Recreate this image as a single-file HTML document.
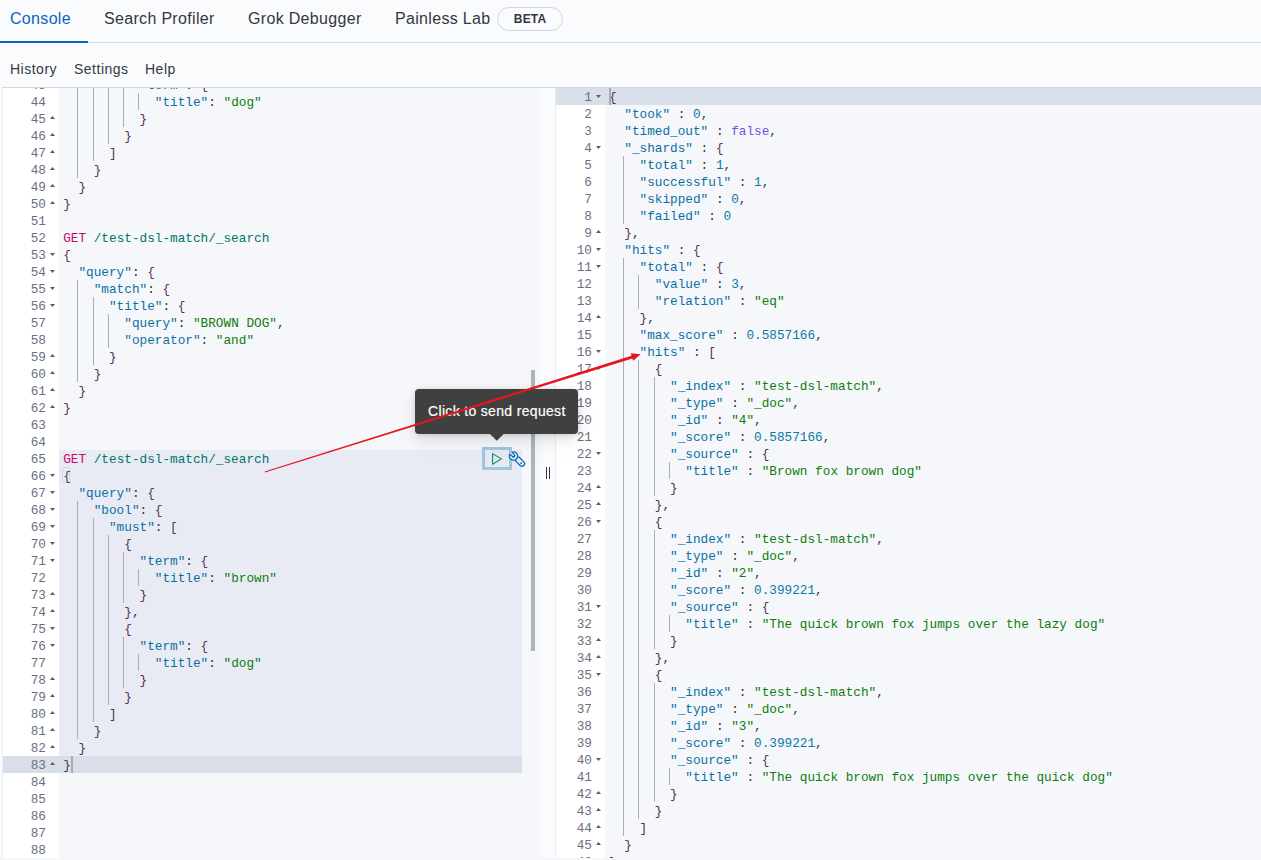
<!DOCTYPE html>
<html><head><meta charset="utf-8">
<style>
*{margin:0;padding:0;box-sizing:border-box}
html,body{width:1261px;height:860px;overflow:hidden;background:#fafbfd;font-family:"Liberation Sans",sans-serif;position:relative}
.abs{position:absolute}
.tab{position:absolute;top:9px;letter-spacing:0.32px;font-size:16px;color:#343741;white-space:nowrap;line-height:20px}
.menu{position:absolute;top:60px;letter-spacing:0.5px;font-size:14px;color:#343741;white-space:nowrap;line-height:18px}
.ed{position:absolute;overflow:hidden}
.inner{position:absolute;left:0;top:-88px;width:1261px;height:860px}
.ln{position:absolute;height:17px;line-height:17px;text-align:right;font-family:"Liberation Mono",monospace;font-size:12.731px;color:#69707d;padding-top:1px}
.tl{position:absolute;height:17px;line-height:17px;white-space:pre;font-family:"Liberation Mono",monospace;font-size:12.731px;color:#343741;padding-top:1px}
.fo,.fc{position:absolute;display:block}
.g{position:absolute;width:1px;height:17px;background:#a8afbc}
.m{color:#c80a68}
.u{color:#00756c}
.k{color:#0b6fa4}
.s{color:#0e7d0e}
.n{color:#0b7aa5}
.b{color:#7052e8}
.p{color:#523455}
.o{color:#343741}
</style></head><body>
<!-- tabs -->
<div class="tab" style="left:10px;color:#0b64c0">Console</div>
<div class="tab" style="left:104px">Search Profiler</div>
<div class="tab" style="left:248px">Grok Debugger</div>
<div class="tab" style="left:395px">Painless Lab</div>
<div class="abs" style="left:497px;top:7px;width:66px;height:24px;border:1px solid #cdd3df;border-radius:12px;font-size:12px;font-weight:bold;color:#343741;text-align:center;line-height:23px;letter-spacing:0.2px;text-indent:0.2px">BETA</div>
<div class="abs" style="left:0;top:42px;width:1261px;height:1px;background:#d3dae6"></div>
<div class="abs" style="left:0;top:41px;width:88px;height:2px;background:#0b64c0"></div>
<!-- menu -->
<div class="menu" style="left:10px">History</div>
<div class="menu" style="left:74px">Settings</div>
<div class="menu" style="left:145px">Help</div>
<!-- editor frame -->
<div class="abs" style="left:2px;top:87px;width:1259px;height:1px;background:#d3dae6"></div>
<div class="abs" style="left:2px;top:88px;width:1px;height:770px;background:#eaedf2"></div>
<div class="abs" style="left:555px;top:88px;width:1px;height:770px;background:#eaedf2"></div>
<div class="abs" style="left:0;top:858px;width:1261px;height:2px;background:#f5f6f9"></div>
<!-- left editor -->
<div class="ed" style="left:0;top:88px;width:541px;height:770px">
<div class="inner">
<div class="abs" style="left:3px;top:88px;width:56px;height:770px;background:#ffffff"></div>
<div class="abs" style="left:59px;top:88px;width:482px;height:770px;background:#f5f7fa"></div>
<div class="abs" style="left:59px;top:450px;width:463px;height:306px;background:#e8ebf3"></div>
<div class="abs" style="left:3px;top:756px;width:519px;height:17px;background:#d9dfe8"></div>
<div class="abs" style="left:62px;top:467px;width:8px;height:16px;border:1px solid #d3d9e3;border-radius:3px"></div>
<div class="ln" style="top:76px;left:3px;width:43px">43</div>
<svg class="fo" style="top:82px;left:50px" width="6" height="5"><path d="M0 1 L5 1 L2.5 4 Z" fill="#5c5c5c"/></svg>
<div class="g" style="top:76px;left:77.0px"></div>
<div class="g" style="top:76px;left:93.0px"></div>
<div class="g" style="top:76px;left:108.0px"></div>
<div class="g" style="top:76px;left:123.0px"></div>
<div class="tl" style="top:76px;left:63.2px">          <span class="k">&quot;term&quot;</span><span class="o">:</span> <span class="p">{</span></div>
<div class="ln" style="top:93px;left:3px;width:43px">44</div>
<div class="g" style="top:93px;left:77.0px"></div>
<div class="g" style="top:93px;left:93.0px"></div>
<div class="g" style="top:93px;left:108.0px"></div>
<div class="g" style="top:93px;left:123.0px"></div>
<div class="g" style="top:93px;left:138.0px"></div>
<div class="tl" style="top:93px;left:63.2px">            <span class="k">&quot;title&quot;</span><span class="o">:</span> <span class="s">&quot;dog&quot;</span></div>
<div class="ln" style="top:110px;left:3px;width:43px">45</div>
<svg class="fc" style="top:115px;left:50px" width="6" height="5"><path d="M0 4 L5 4 L2.5 0.9 Z" fill="#5c5c5c"/></svg>
<div class="g" style="top:110px;left:77.0px"></div>
<div class="g" style="top:110px;left:93.0px"></div>
<div class="g" style="top:110px;left:108.0px"></div>
<div class="g" style="top:110px;left:123.0px"></div>
<div class="tl" style="top:110px;left:63.2px">          <span class="p">}</span></div>
<div class="ln" style="top:127px;left:3px;width:43px">46</div>
<svg class="fc" style="top:132px;left:50px" width="6" height="5"><path d="M0 4 L5 4 L2.5 0.9 Z" fill="#5c5c5c"/></svg>
<div class="g" style="top:127px;left:77.0px"></div>
<div class="g" style="top:127px;left:93.0px"></div>
<div class="g" style="top:127px;left:108.0px"></div>
<div class="tl" style="top:127px;left:63.2px">        <span class="p">}</span></div>
<div class="ln" style="top:144px;left:3px;width:43px">47</div>
<svg class="fc" style="top:149px;left:50px" width="6" height="5"><path d="M0 4 L5 4 L2.5 0.9 Z" fill="#5c5c5c"/></svg>
<div class="g" style="top:144px;left:77.0px"></div>
<div class="g" style="top:144px;left:93.0px"></div>
<div class="tl" style="top:144px;left:63.2px">      <span class="p">]</span></div>
<div class="ln" style="top:161px;left:3px;width:43px">48</div>
<svg class="fc" style="top:166px;left:50px" width="6" height="5"><path d="M0 4 L5 4 L2.5 0.9 Z" fill="#5c5c5c"/></svg>
<div class="g" style="top:161px;left:77.0px"></div>
<div class="tl" style="top:161px;left:63.2px">    <span class="p">}</span></div>
<div class="ln" style="top:178px;left:3px;width:43px">49</div>
<svg class="fc" style="top:183px;left:50px" width="6" height="5"><path d="M0 4 L5 4 L2.5 0.9 Z" fill="#5c5c5c"/></svg>
<div class="tl" style="top:178px;left:63.2px">  <span class="p">}</span></div>
<div class="ln" style="top:195px;left:3px;width:43px">50</div>
<svg class="fc" style="top:200px;left:50px" width="6" height="5"><path d="M0 4 L5 4 L2.5 0.9 Z" fill="#5c5c5c"/></svg>
<div class="tl" style="top:195px;left:63.2px"><span class="p">}</span></div>
<div class="ln" style="top:212px;left:3px;width:43px">51</div>
<div class="tl" style="top:212px;left:63.2px"></div>
<div class="ln" style="top:229px;left:3px;width:43px">52</div>
<div class="tl" style="top:229px;left:63.2px"><span class="m">GET</span> <span class="u">/test-dsl-match/_search</span></div>
<div class="ln" style="top:246px;left:3px;width:43px">53</div>
<svg class="fo" style="top:252px;left:50px" width="6" height="5"><path d="M0 1 L5 1 L2.5 4 Z" fill="#5c5c5c"/></svg>
<div class="tl" style="top:246px;left:63.2px"><span class="p">{</span></div>
<div class="ln" style="top:263px;left:3px;width:43px">54</div>
<svg class="fo" style="top:269px;left:50px" width="6" height="5"><path d="M0 1 L5 1 L2.5 4 Z" fill="#5c5c5c"/></svg>
<div class="tl" style="top:263px;left:63.2px">  <span class="k">&quot;query&quot;</span><span class="o">:</span> <span class="p">{</span></div>
<div class="ln" style="top:280px;left:3px;width:43px">55</div>
<svg class="fo" style="top:286px;left:50px" width="6" height="5"><path d="M0 1 L5 1 L2.5 4 Z" fill="#5c5c5c"/></svg>
<div class="g" style="top:280px;left:77.0px"></div>
<div class="tl" style="top:280px;left:63.2px">    <span class="k">&quot;match&quot;</span><span class="o">:</span> <span class="p">{</span></div>
<div class="ln" style="top:297px;left:3px;width:43px">56</div>
<svg class="fo" style="top:303px;left:50px" width="6" height="5"><path d="M0 1 L5 1 L2.5 4 Z" fill="#5c5c5c"/></svg>
<div class="g" style="top:297px;left:77.0px"></div>
<div class="g" style="top:297px;left:93.0px"></div>
<div class="tl" style="top:297px;left:63.2px">      <span class="k">&quot;title&quot;</span><span class="o">:</span> <span class="p">{</span></div>
<div class="ln" style="top:314px;left:3px;width:43px">57</div>
<div class="g" style="top:314px;left:77.0px"></div>
<div class="g" style="top:314px;left:93.0px"></div>
<div class="g" style="top:314px;left:108.0px"></div>
<div class="tl" style="top:314px;left:63.2px">        <span class="k">&quot;query&quot;</span><span class="o">:</span> <span class="s">&quot;BROWN DOG&quot;</span><span class="o">,</span></div>
<div class="ln" style="top:331px;left:3px;width:43px">58</div>
<div class="g" style="top:331px;left:77.0px"></div>
<div class="g" style="top:331px;left:93.0px"></div>
<div class="g" style="top:331px;left:108.0px"></div>
<div class="tl" style="top:331px;left:63.2px">        <span class="k">&quot;operator&quot;</span><span class="o">:</span> <span class="s">&quot;and&quot;</span></div>
<div class="ln" style="top:348px;left:3px;width:43px">59</div>
<svg class="fc" style="top:353px;left:50px" width="6" height="5"><path d="M0 4 L5 4 L2.5 0.9 Z" fill="#5c5c5c"/></svg>
<div class="g" style="top:348px;left:77.0px"></div>
<div class="g" style="top:348px;left:93.0px"></div>
<div class="tl" style="top:348px;left:63.2px">      <span class="p">}</span></div>
<div class="ln" style="top:365px;left:3px;width:43px">60</div>
<svg class="fc" style="top:370px;left:50px" width="6" height="5"><path d="M0 4 L5 4 L2.5 0.9 Z" fill="#5c5c5c"/></svg>
<div class="g" style="top:365px;left:77.0px"></div>
<div class="tl" style="top:365px;left:63.2px">    <span class="p">}</span></div>
<div class="ln" style="top:382px;left:3px;width:43px">61</div>
<svg class="fc" style="top:387px;left:50px" width="6" height="5"><path d="M0 4 L5 4 L2.5 0.9 Z" fill="#5c5c5c"/></svg>
<div class="tl" style="top:382px;left:63.2px">  <span class="p">}</span></div>
<div class="ln" style="top:399px;left:3px;width:43px">62</div>
<svg class="fc" style="top:404px;left:50px" width="6" height="5"><path d="M0 4 L5 4 L2.5 0.9 Z" fill="#5c5c5c"/></svg>
<div class="tl" style="top:399px;left:63.2px"><span class="p">}</span></div>
<div class="ln" style="top:416px;left:3px;width:43px">63</div>
<div class="tl" style="top:416px;left:63.2px"></div>
<div class="ln" style="top:433px;left:3px;width:43px">64</div>
<div class="tl" style="top:433px;left:63.2px"></div>
<div class="ln" style="top:450px;left:3px;width:43px">65</div>
<div class="tl" style="top:450px;left:63.2px"><span class="m">GET</span> <span class="u">/test-dsl-match/_search</span></div>
<div class="ln" style="top:467px;left:3px;width:43px">66</div>
<svg class="fo" style="top:473px;left:50px" width="6" height="5"><path d="M0 1 L5 1 L2.5 4 Z" fill="#5c5c5c"/></svg>
<div class="tl" style="top:467px;left:63.2px"><span class="p">{</span></div>
<div class="ln" style="top:484px;left:3px;width:43px">67</div>
<svg class="fo" style="top:490px;left:50px" width="6" height="5"><path d="M0 1 L5 1 L2.5 4 Z" fill="#5c5c5c"/></svg>
<div class="tl" style="top:484px;left:63.2px">  <span class="k">&quot;query&quot;</span><span class="o">:</span> <span class="p">{</span></div>
<div class="ln" style="top:501px;left:3px;width:43px">68</div>
<svg class="fo" style="top:507px;left:50px" width="6" height="5"><path d="M0 1 L5 1 L2.5 4 Z" fill="#5c5c5c"/></svg>
<div class="g" style="top:501px;left:77.0px"></div>
<div class="tl" style="top:501px;left:63.2px">    <span class="k">&quot;bool&quot;</span><span class="o">:</span> <span class="p">{</span></div>
<div class="ln" style="top:518px;left:3px;width:43px">69</div>
<svg class="fo" style="top:524px;left:50px" width="6" height="5"><path d="M0 1 L5 1 L2.5 4 Z" fill="#5c5c5c"/></svg>
<div class="g" style="top:518px;left:77.0px"></div>
<div class="g" style="top:518px;left:93.0px"></div>
<div class="tl" style="top:518px;left:63.2px">      <span class="k">&quot;must&quot;</span><span class="o">:</span> <span class="p">[</span></div>
<div class="ln" style="top:535px;left:3px;width:43px">70</div>
<svg class="fo" style="top:541px;left:50px" width="6" height="5"><path d="M0 1 L5 1 L2.5 4 Z" fill="#5c5c5c"/></svg>
<div class="g" style="top:535px;left:77.0px"></div>
<div class="g" style="top:535px;left:93.0px"></div>
<div class="g" style="top:535px;left:108.0px"></div>
<div class="tl" style="top:535px;left:63.2px">        <span class="p">{</span></div>
<div class="ln" style="top:552px;left:3px;width:43px">71</div>
<svg class="fo" style="top:558px;left:50px" width="6" height="5"><path d="M0 1 L5 1 L2.5 4 Z" fill="#5c5c5c"/></svg>
<div class="g" style="top:552px;left:77.0px"></div>
<div class="g" style="top:552px;left:93.0px"></div>
<div class="g" style="top:552px;left:108.0px"></div>
<div class="g" style="top:552px;left:123.0px"></div>
<div class="tl" style="top:552px;left:63.2px">          <span class="k">&quot;term&quot;</span><span class="o">:</span> <span class="p">{</span></div>
<div class="ln" style="top:569px;left:3px;width:43px">72</div>
<div class="g" style="top:569px;left:77.0px"></div>
<div class="g" style="top:569px;left:93.0px"></div>
<div class="g" style="top:569px;left:108.0px"></div>
<div class="g" style="top:569px;left:123.0px"></div>
<div class="g" style="top:569px;left:138.0px"></div>
<div class="tl" style="top:569px;left:63.2px">            <span class="k">&quot;title&quot;</span><span class="o">:</span> <span class="s">&quot;brown&quot;</span></div>
<div class="ln" style="top:586px;left:3px;width:43px">73</div>
<svg class="fc" style="top:591px;left:50px" width="6" height="5"><path d="M0 4 L5 4 L2.5 0.9 Z" fill="#5c5c5c"/></svg>
<div class="g" style="top:586px;left:77.0px"></div>
<div class="g" style="top:586px;left:93.0px"></div>
<div class="g" style="top:586px;left:108.0px"></div>
<div class="g" style="top:586px;left:123.0px"></div>
<div class="tl" style="top:586px;left:63.2px">          <span class="p">}</span></div>
<div class="ln" style="top:603px;left:3px;width:43px">74</div>
<svg class="fc" style="top:608px;left:50px" width="6" height="5"><path d="M0 4 L5 4 L2.5 0.9 Z" fill="#5c5c5c"/></svg>
<div class="g" style="top:603px;left:77.0px"></div>
<div class="g" style="top:603px;left:93.0px"></div>
<div class="g" style="top:603px;left:108.0px"></div>
<div class="tl" style="top:603px;left:63.2px">        <span class="p">}</span><span class="o">,</span></div>
<div class="ln" style="top:620px;left:3px;width:43px">75</div>
<svg class="fo" style="top:626px;left:50px" width="6" height="5"><path d="M0 1 L5 1 L2.5 4 Z" fill="#5c5c5c"/></svg>
<div class="g" style="top:620px;left:77.0px"></div>
<div class="g" style="top:620px;left:93.0px"></div>
<div class="g" style="top:620px;left:108.0px"></div>
<div class="tl" style="top:620px;left:63.2px">        <span class="p">{</span></div>
<div class="ln" style="top:637px;left:3px;width:43px">76</div>
<svg class="fo" style="top:643px;left:50px" width="6" height="5"><path d="M0 1 L5 1 L2.5 4 Z" fill="#5c5c5c"/></svg>
<div class="g" style="top:637px;left:77.0px"></div>
<div class="g" style="top:637px;left:93.0px"></div>
<div class="g" style="top:637px;left:108.0px"></div>
<div class="g" style="top:637px;left:123.0px"></div>
<div class="tl" style="top:637px;left:63.2px">          <span class="k">&quot;term&quot;</span><span class="o">:</span> <span class="p">{</span></div>
<div class="ln" style="top:654px;left:3px;width:43px">77</div>
<div class="g" style="top:654px;left:77.0px"></div>
<div class="g" style="top:654px;left:93.0px"></div>
<div class="g" style="top:654px;left:108.0px"></div>
<div class="g" style="top:654px;left:123.0px"></div>
<div class="g" style="top:654px;left:138.0px"></div>
<div class="tl" style="top:654px;left:63.2px">            <span class="k">&quot;title&quot;</span><span class="o">:</span> <span class="s">&quot;dog&quot;</span></div>
<div class="ln" style="top:671px;left:3px;width:43px">78</div>
<svg class="fc" style="top:676px;left:50px" width="6" height="5"><path d="M0 4 L5 4 L2.5 0.9 Z" fill="#5c5c5c"/></svg>
<div class="g" style="top:671px;left:77.0px"></div>
<div class="g" style="top:671px;left:93.0px"></div>
<div class="g" style="top:671px;left:108.0px"></div>
<div class="g" style="top:671px;left:123.0px"></div>
<div class="tl" style="top:671px;left:63.2px">          <span class="p">}</span></div>
<div class="ln" style="top:688px;left:3px;width:43px">79</div>
<svg class="fc" style="top:693px;left:50px" width="6" height="5"><path d="M0 4 L5 4 L2.5 0.9 Z" fill="#5c5c5c"/></svg>
<div class="g" style="top:688px;left:77.0px"></div>
<div class="g" style="top:688px;left:93.0px"></div>
<div class="g" style="top:688px;left:108.0px"></div>
<div class="tl" style="top:688px;left:63.2px">        <span class="p">}</span></div>
<div class="ln" style="top:705px;left:3px;width:43px">80</div>
<svg class="fc" style="top:710px;left:50px" width="6" height="5"><path d="M0 4 L5 4 L2.5 0.9 Z" fill="#5c5c5c"/></svg>
<div class="g" style="top:705px;left:77.0px"></div>
<div class="g" style="top:705px;left:93.0px"></div>
<div class="tl" style="top:705px;left:63.2px">      <span class="p">]</span></div>
<div class="ln" style="top:722px;left:3px;width:43px">81</div>
<svg class="fc" style="top:727px;left:50px" width="6" height="5"><path d="M0 4 L5 4 L2.5 0.9 Z" fill="#5c5c5c"/></svg>
<div class="g" style="top:722px;left:77.0px"></div>
<div class="tl" style="top:722px;left:63.2px">    <span class="p">}</span></div>
<div class="ln" style="top:739px;left:3px;width:43px">82</div>
<svg class="fc" style="top:744px;left:50px" width="6" height="5"><path d="M0 4 L5 4 L2.5 0.9 Z" fill="#5c5c5c"/></svg>
<div class="tl" style="top:739px;left:63.2px">  <span class="p">}</span></div>
<div class="ln" style="top:756px;left:3px;width:43px">83</div>
<svg class="fc" style="top:761px;left:50px" width="6" height="5"><path d="M0 4 L5 4 L2.5 0.9 Z" fill="#5c5c5c"/></svg>
<div class="tl" style="top:756px;left:63.2px"><span class="p">}</span></div>
<div class="ln" style="top:773px;left:3px;width:43px">84</div>
<div class="tl" style="top:773px;left:63.2px"></div>
<div class="ln" style="top:790px;left:3px;width:43px">85</div>
<div class="tl" style="top:790px;left:63.2px"></div>
<div class="ln" style="top:807px;left:3px;width:43px">86</div>
<div class="tl" style="top:807px;left:63.2px"></div>
<div class="ln" style="top:824px;left:3px;width:43px">87</div>
<div class="tl" style="top:824px;left:63.2px"></div>
<div class="ln" style="top:841px;left:3px;width:43px">88</div>
<div class="tl" style="top:841px;left:63.2px"></div>
<div class="ln" style="top:858px;left:3px;width:43px">89</div>
<div class="tl" style="top:858px;left:63.2px"></div>
<div class="abs" style="left:71px;top:756px;width:2px;height:17px;background:#a6aab2"></div>
<div class="abs" style="left:531px;top:370px;width:4px;height:281px;background:#adb2bb"></div>
</div></div>
<!-- right editor -->
<div class="ed" style="left:556px;top:88px;width:705px;height:770px">
<div class="inner" style="left:-556px">
<div class="abs" style="left:556px;top:88px;width:49px;height:770px;background:#ffffff"></div>
<div class="abs" style="left:605px;top:88px;width:656px;height:770px;background:#f5f7fa"></div>
<div class="abs" style="left:556px;top:88px;width:705px;height:17px;background:#d9dfe8"></div>
<div class="ln" style="top:88px;left:556px;width:36px">1</div>
<svg class="fo" style="top:94px;left:596px" width="6" height="5"><path d="M0 1 L5 1 L2.5 4 Z" fill="#5c5c5c"/></svg>
<div class="tl" style="top:88px;left:609.0px"><span class="p">{</span></div>
<div class="ln" style="top:105px;left:556px;width:36px">2</div>
<div class="tl" style="top:105px;left:609.0px">  <span class="k">&quot;took&quot;</span> <span class="o">:</span> <span class="n">0</span><span class="o">,</span></div>
<div class="ln" style="top:122px;left:556px;width:36px">3</div>
<div class="tl" style="top:122px;left:609.0px">  <span class="k">&quot;timed_out&quot;</span> <span class="o">:</span> <span class="b">false</span><span class="o">,</span></div>
<div class="ln" style="top:139px;left:556px;width:36px">4</div>
<svg class="fo" style="top:145px;left:596px" width="6" height="5"><path d="M0 1 L5 1 L2.5 4 Z" fill="#5c5c5c"/></svg>
<div class="tl" style="top:139px;left:609.0px">  <span class="k">&quot;_shards&quot;</span> <span class="o">:</span> <span class="p">{</span></div>
<div class="ln" style="top:156px;left:556px;width:36px">5</div>
<div class="g" style="top:156px;left:623.0px"></div>
<div class="tl" style="top:156px;left:609.0px">    <span class="k">&quot;total&quot;</span> <span class="o">:</span> <span class="n">1</span><span class="o">,</span></div>
<div class="ln" style="top:173px;left:556px;width:36px">6</div>
<div class="g" style="top:173px;left:623.0px"></div>
<div class="tl" style="top:173px;left:609.0px">    <span class="k">&quot;successful&quot;</span> <span class="o">:</span> <span class="n">1</span><span class="o">,</span></div>
<div class="ln" style="top:190px;left:556px;width:36px">7</div>
<div class="g" style="top:190px;left:623.0px"></div>
<div class="tl" style="top:190px;left:609.0px">    <span class="k">&quot;skipped&quot;</span> <span class="o">:</span> <span class="n">0</span><span class="o">,</span></div>
<div class="ln" style="top:207px;left:556px;width:36px">8</div>
<div class="g" style="top:207px;left:623.0px"></div>
<div class="tl" style="top:207px;left:609.0px">    <span class="k">&quot;failed&quot;</span> <span class="o">:</span> <span class="n">0</span></div>
<div class="ln" style="top:224px;left:556px;width:36px">9</div>
<svg class="fc" style="top:229px;left:596px" width="6" height="5"><path d="M0 4 L5 4 L2.5 0.9 Z" fill="#5c5c5c"/></svg>
<div class="tl" style="top:224px;left:609.0px">  <span class="p">}</span><span class="o">,</span></div>
<div class="ln" style="top:241px;left:556px;width:36px">10</div>
<svg class="fo" style="top:247px;left:596px" width="6" height="5"><path d="M0 1 L5 1 L2.5 4 Z" fill="#5c5c5c"/></svg>
<div class="tl" style="top:241px;left:609.0px">  <span class="k">&quot;hits&quot;</span> <span class="o">:</span> <span class="p">{</span></div>
<div class="ln" style="top:258px;left:556px;width:36px">11</div>
<svg class="fo" style="top:264px;left:596px" width="6" height="5"><path d="M0 1 L5 1 L2.5 4 Z" fill="#5c5c5c"/></svg>
<div class="g" style="top:258px;left:623.0px"></div>
<div class="tl" style="top:258px;left:609.0px">    <span class="k">&quot;total&quot;</span> <span class="o">:</span> <span class="p">{</span></div>
<div class="ln" style="top:275px;left:556px;width:36px">12</div>
<div class="g" style="top:275px;left:623.0px"></div>
<div class="g" style="top:275px;left:638.0px"></div>
<div class="tl" style="top:275px;left:609.0px">      <span class="k">&quot;value&quot;</span> <span class="o">:</span> <span class="n">3</span><span class="o">,</span></div>
<div class="ln" style="top:292px;left:556px;width:36px">13</div>
<div class="g" style="top:292px;left:623.0px"></div>
<div class="g" style="top:292px;left:638.0px"></div>
<div class="tl" style="top:292px;left:609.0px">      <span class="k">&quot;relation&quot;</span> <span class="o">:</span> <span class="s">&quot;eq&quot;</span></div>
<div class="ln" style="top:309px;left:556px;width:36px">14</div>
<svg class="fc" style="top:314px;left:596px" width="6" height="5"><path d="M0 4 L5 4 L2.5 0.9 Z" fill="#5c5c5c"/></svg>
<div class="g" style="top:309px;left:623.0px"></div>
<div class="tl" style="top:309px;left:609.0px">    <span class="p">}</span><span class="o">,</span></div>
<div class="ln" style="top:326px;left:556px;width:36px">15</div>
<div class="g" style="top:326px;left:623.0px"></div>
<div class="tl" style="top:326px;left:609.0px">    <span class="k">&quot;max_score&quot;</span> <span class="o">:</span> <span class="n">0.5857166</span><span class="o">,</span></div>
<div class="ln" style="top:343px;left:556px;width:36px">16</div>
<svg class="fo" style="top:349px;left:596px" width="6" height="5"><path d="M0 1 L5 1 L2.5 4 Z" fill="#5c5c5c"/></svg>
<div class="g" style="top:343px;left:623.0px"></div>
<div class="tl" style="top:343px;left:609.0px">    <span class="k">&quot;hits&quot;</span> <span class="o">:</span> <span class="p">[</span></div>
<div class="ln" style="top:360px;left:556px;width:36px">17</div>
<svg class="fo" style="top:366px;left:596px" width="6" height="5"><path d="M0 1 L5 1 L2.5 4 Z" fill="#5c5c5c"/></svg>
<div class="g" style="top:360px;left:623.0px"></div>
<div class="g" style="top:360px;left:638.0px"></div>
<div class="tl" style="top:360px;left:609.0px">      <span class="p">{</span></div>
<div class="ln" style="top:377px;left:556px;width:36px">18</div>
<div class="g" style="top:377px;left:623.0px"></div>
<div class="g" style="top:377px;left:638.0px"></div>
<div class="g" style="top:377px;left:654.0px"></div>
<div class="tl" style="top:377px;left:609.0px">        <span class="k">&quot;_index&quot;</span> <span class="o">:</span> <span class="s">&quot;test-dsl-match&quot;</span><span class="o">,</span></div>
<div class="ln" style="top:394px;left:556px;width:36px">19</div>
<div class="g" style="top:394px;left:623.0px"></div>
<div class="g" style="top:394px;left:638.0px"></div>
<div class="g" style="top:394px;left:654.0px"></div>
<div class="tl" style="top:394px;left:609.0px">        <span class="k">&quot;_type&quot;</span> <span class="o">:</span> <span class="s">&quot;_doc&quot;</span><span class="o">,</span></div>
<div class="ln" style="top:411px;left:556px;width:36px">20</div>
<div class="g" style="top:411px;left:623.0px"></div>
<div class="g" style="top:411px;left:638.0px"></div>
<div class="g" style="top:411px;left:654.0px"></div>
<div class="tl" style="top:411px;left:609.0px">        <span class="k">&quot;_id&quot;</span> <span class="o">:</span> <span class="s">&quot;4&quot;</span><span class="o">,</span></div>
<div class="ln" style="top:428px;left:556px;width:36px">21</div>
<div class="g" style="top:428px;left:623.0px"></div>
<div class="g" style="top:428px;left:638.0px"></div>
<div class="g" style="top:428px;left:654.0px"></div>
<div class="tl" style="top:428px;left:609.0px">        <span class="k">&quot;_score&quot;</span> <span class="o">:</span> <span class="n">0.5857166</span><span class="o">,</span></div>
<div class="ln" style="top:445px;left:556px;width:36px">22</div>
<svg class="fo" style="top:451px;left:596px" width="6" height="5"><path d="M0 1 L5 1 L2.5 4 Z" fill="#5c5c5c"/></svg>
<div class="g" style="top:445px;left:623.0px"></div>
<div class="g" style="top:445px;left:638.0px"></div>
<div class="g" style="top:445px;left:654.0px"></div>
<div class="tl" style="top:445px;left:609.0px">        <span class="k">&quot;_source&quot;</span> <span class="o">:</span> <span class="p">{</span></div>
<div class="ln" style="top:462px;left:556px;width:36px">23</div>
<div class="g" style="top:462px;left:623.0px"></div>
<div class="g" style="top:462px;left:638.0px"></div>
<div class="g" style="top:462px;left:654.0px"></div>
<div class="g" style="top:462px;left:669.0px"></div>
<div class="tl" style="top:462px;left:609.0px">          <span class="k">&quot;title&quot;</span> <span class="o">:</span> <span class="s">&quot;Brown fox brown dog&quot;</span></div>
<div class="ln" style="top:479px;left:556px;width:36px">24</div>
<svg class="fc" style="top:484px;left:596px" width="6" height="5"><path d="M0 4 L5 4 L2.5 0.9 Z" fill="#5c5c5c"/></svg>
<div class="g" style="top:479px;left:623.0px"></div>
<div class="g" style="top:479px;left:638.0px"></div>
<div class="g" style="top:479px;left:654.0px"></div>
<div class="tl" style="top:479px;left:609.0px">        <span class="p">}</span></div>
<div class="ln" style="top:496px;left:556px;width:36px">25</div>
<svg class="fc" style="top:501px;left:596px" width="6" height="5"><path d="M0 4 L5 4 L2.5 0.9 Z" fill="#5c5c5c"/></svg>
<div class="g" style="top:496px;left:623.0px"></div>
<div class="g" style="top:496px;left:638.0px"></div>
<div class="tl" style="top:496px;left:609.0px">      <span class="p">}</span><span class="o">,</span></div>
<div class="ln" style="top:513px;left:556px;width:36px">26</div>
<svg class="fo" style="top:519px;left:596px" width="6" height="5"><path d="M0 1 L5 1 L2.5 4 Z" fill="#5c5c5c"/></svg>
<div class="g" style="top:513px;left:623.0px"></div>
<div class="g" style="top:513px;left:638.0px"></div>
<div class="tl" style="top:513px;left:609.0px">      <span class="p">{</span></div>
<div class="ln" style="top:530px;left:556px;width:36px">27</div>
<div class="g" style="top:530px;left:623.0px"></div>
<div class="g" style="top:530px;left:638.0px"></div>
<div class="g" style="top:530px;left:654.0px"></div>
<div class="tl" style="top:530px;left:609.0px">        <span class="k">&quot;_index&quot;</span> <span class="o">:</span> <span class="s">&quot;test-dsl-match&quot;</span><span class="o">,</span></div>
<div class="ln" style="top:547px;left:556px;width:36px">28</div>
<div class="g" style="top:547px;left:623.0px"></div>
<div class="g" style="top:547px;left:638.0px"></div>
<div class="g" style="top:547px;left:654.0px"></div>
<div class="tl" style="top:547px;left:609.0px">        <span class="k">&quot;_type&quot;</span> <span class="o">:</span> <span class="s">&quot;_doc&quot;</span><span class="o">,</span></div>
<div class="ln" style="top:564px;left:556px;width:36px">29</div>
<div class="g" style="top:564px;left:623.0px"></div>
<div class="g" style="top:564px;left:638.0px"></div>
<div class="g" style="top:564px;left:654.0px"></div>
<div class="tl" style="top:564px;left:609.0px">        <span class="k">&quot;_id&quot;</span> <span class="o">:</span> <span class="s">&quot;2&quot;</span><span class="o">,</span></div>
<div class="ln" style="top:581px;left:556px;width:36px">30</div>
<div class="g" style="top:581px;left:623.0px"></div>
<div class="g" style="top:581px;left:638.0px"></div>
<div class="g" style="top:581px;left:654.0px"></div>
<div class="tl" style="top:581px;left:609.0px">        <span class="k">&quot;_score&quot;</span> <span class="o">:</span> <span class="n">0.399221</span><span class="o">,</span></div>
<div class="ln" style="top:598px;left:556px;width:36px">31</div>
<svg class="fo" style="top:604px;left:596px" width="6" height="5"><path d="M0 1 L5 1 L2.5 4 Z" fill="#5c5c5c"/></svg>
<div class="g" style="top:598px;left:623.0px"></div>
<div class="g" style="top:598px;left:638.0px"></div>
<div class="g" style="top:598px;left:654.0px"></div>
<div class="tl" style="top:598px;left:609.0px">        <span class="k">&quot;_source&quot;</span> <span class="o">:</span> <span class="p">{</span></div>
<div class="ln" style="top:615px;left:556px;width:36px">32</div>
<div class="g" style="top:615px;left:623.0px"></div>
<div class="g" style="top:615px;left:638.0px"></div>
<div class="g" style="top:615px;left:654.0px"></div>
<div class="g" style="top:615px;left:669.0px"></div>
<div class="tl" style="top:615px;left:609.0px">          <span class="k">&quot;title&quot;</span> <span class="o">:</span> <span class="s">&quot;The quick brown fox jumps over the lazy dog&quot;</span></div>
<div class="ln" style="top:632px;left:556px;width:36px">33</div>
<svg class="fc" style="top:637px;left:596px" width="6" height="5"><path d="M0 4 L5 4 L2.5 0.9 Z" fill="#5c5c5c"/></svg>
<div class="g" style="top:632px;left:623.0px"></div>
<div class="g" style="top:632px;left:638.0px"></div>
<div class="g" style="top:632px;left:654.0px"></div>
<div class="tl" style="top:632px;left:609.0px">        <span class="p">}</span></div>
<div class="ln" style="top:649px;left:556px;width:36px">34</div>
<svg class="fc" style="top:654px;left:596px" width="6" height="5"><path d="M0 4 L5 4 L2.5 0.9 Z" fill="#5c5c5c"/></svg>
<div class="g" style="top:649px;left:623.0px"></div>
<div class="g" style="top:649px;left:638.0px"></div>
<div class="tl" style="top:649px;left:609.0px">      <span class="p">}</span><span class="o">,</span></div>
<div class="ln" style="top:666px;left:556px;width:36px">35</div>
<svg class="fo" style="top:672px;left:596px" width="6" height="5"><path d="M0 1 L5 1 L2.5 4 Z" fill="#5c5c5c"/></svg>
<div class="g" style="top:666px;left:623.0px"></div>
<div class="g" style="top:666px;left:638.0px"></div>
<div class="tl" style="top:666px;left:609.0px">      <span class="p">{</span></div>
<div class="ln" style="top:683px;left:556px;width:36px">36</div>
<div class="g" style="top:683px;left:623.0px"></div>
<div class="g" style="top:683px;left:638.0px"></div>
<div class="g" style="top:683px;left:654.0px"></div>
<div class="tl" style="top:683px;left:609.0px">        <span class="k">&quot;_index&quot;</span> <span class="o">:</span> <span class="s">&quot;test-dsl-match&quot;</span><span class="o">,</span></div>
<div class="ln" style="top:700px;left:556px;width:36px">37</div>
<div class="g" style="top:700px;left:623.0px"></div>
<div class="g" style="top:700px;left:638.0px"></div>
<div class="g" style="top:700px;left:654.0px"></div>
<div class="tl" style="top:700px;left:609.0px">        <span class="k">&quot;_type&quot;</span> <span class="o">:</span> <span class="s">&quot;_doc&quot;</span><span class="o">,</span></div>
<div class="ln" style="top:717px;left:556px;width:36px">38</div>
<div class="g" style="top:717px;left:623.0px"></div>
<div class="g" style="top:717px;left:638.0px"></div>
<div class="g" style="top:717px;left:654.0px"></div>
<div class="tl" style="top:717px;left:609.0px">        <span class="k">&quot;_id&quot;</span> <span class="o">:</span> <span class="s">&quot;3&quot;</span><span class="o">,</span></div>
<div class="ln" style="top:734px;left:556px;width:36px">39</div>
<div class="g" style="top:734px;left:623.0px"></div>
<div class="g" style="top:734px;left:638.0px"></div>
<div class="g" style="top:734px;left:654.0px"></div>
<div class="tl" style="top:734px;left:609.0px">        <span class="k">&quot;_score&quot;</span> <span class="o">:</span> <span class="n">0.399221</span><span class="o">,</span></div>
<div class="ln" style="top:751px;left:556px;width:36px">40</div>
<svg class="fo" style="top:757px;left:596px" width="6" height="5"><path d="M0 1 L5 1 L2.5 4 Z" fill="#5c5c5c"/></svg>
<div class="g" style="top:751px;left:623.0px"></div>
<div class="g" style="top:751px;left:638.0px"></div>
<div class="g" style="top:751px;left:654.0px"></div>
<div class="tl" style="top:751px;left:609.0px">        <span class="k">&quot;_source&quot;</span> <span class="o">:</span> <span class="p">{</span></div>
<div class="ln" style="top:768px;left:556px;width:36px">41</div>
<div class="g" style="top:768px;left:623.0px"></div>
<div class="g" style="top:768px;left:638.0px"></div>
<div class="g" style="top:768px;left:654.0px"></div>
<div class="g" style="top:768px;left:669.0px"></div>
<div class="tl" style="top:768px;left:609.0px">          <span class="k">&quot;title&quot;</span> <span class="o">:</span> <span class="s">&quot;The quick brown fox jumps over the quick dog&quot;</span></div>
<div class="ln" style="top:785px;left:556px;width:36px">42</div>
<svg class="fc" style="top:790px;left:596px" width="6" height="5"><path d="M0 4 L5 4 L2.5 0.9 Z" fill="#5c5c5c"/></svg>
<div class="g" style="top:785px;left:623.0px"></div>
<div class="g" style="top:785px;left:638.0px"></div>
<div class="g" style="top:785px;left:654.0px"></div>
<div class="tl" style="top:785px;left:609.0px">        <span class="p">}</span></div>
<div class="ln" style="top:802px;left:556px;width:36px">43</div>
<svg class="fc" style="top:807px;left:596px" width="6" height="5"><path d="M0 4 L5 4 L2.5 0.9 Z" fill="#5c5c5c"/></svg>
<div class="g" style="top:802px;left:623.0px"></div>
<div class="g" style="top:802px;left:638.0px"></div>
<div class="tl" style="top:802px;left:609.0px">      <span class="p">}</span></div>
<div class="ln" style="top:819px;left:556px;width:36px">44</div>
<svg class="fc" style="top:824px;left:596px" width="6" height="5"><path d="M0 4 L5 4 L2.5 0.9 Z" fill="#5c5c5c"/></svg>
<div class="g" style="top:819px;left:623.0px"></div>
<div class="tl" style="top:819px;left:609.0px">    <span class="p">]</span></div>
<div class="ln" style="top:836px;left:556px;width:36px">45</div>
<svg class="fc" style="top:841px;left:596px" width="6" height="5"><path d="M0 4 L5 4 L2.5 0.9 Z" fill="#5c5c5c"/></svg>
<div class="tl" style="top:836px;left:609.0px">  <span class="p">}</span></div>
<div class="ln" style="top:853px;left:556px;width:36px">46</div>
<svg class="fc" style="top:858px;left:596px" width="6" height="5"><path d="M0 4 L5 4 L2.5 0.9 Z" fill="#5c5c5c"/></svg>
<div class="tl" style="top:853px;left:609.0px"><span class="p">}</span></div>
<div class="abs" style="left:609px;top:88px;width:2px;height:17px;background:#a6aab2"></div>
</div></div>
<!-- resizer -->
<div class="abs" style="left:546px;top:467px;width:1px;height:12px;background:#343741"></div>
<div class="abs" style="left:549px;top:467px;width:1px;height:12px;background:#343741"></div>
<!-- action buttons -->
<div class="abs" style="left:482px;top:447px;width:30px;height:23px;border:3px solid #a3c4e0;background:#e5e9f0"></div>
<svg class="abs" style="left:488px;top:450px" width="18" height="18" viewBox="0 0 18 18"><path d="M4.6 3.6 L13.4 8.9 L4.6 14.3 Z" fill="none" stroke="#0f8474" stroke-width="1.1" stroke-linejoin="round"/></svg>
<svg class="abs" style="left:506px;top:448px" width="22" height="22" viewBox="0 0 22 22">
<line x1="11.6" y1="11.3" x2="16.0" y2="15.7" stroke="#006bb8" stroke-width="6.4" stroke-linecap="round"/>
<line x1="11.6" y1="11.3" x2="16.0" y2="15.7" stroke="#e8ebf3" stroke-width="4.0" stroke-linecap="round"/>
<circle cx="8.1" cy="7.8" r="4.4" fill="#e8ebf3"/>
<path d="M6.1 4.2 A4.15 4.15 0 1 1 3.9 6.1 L7.3 9.3 L9.0 7.7 Z" fill="none" stroke="#006bb8" stroke-width="1.2" stroke-linejoin="round"/>
<circle cx="15.1" cy="15.1" r="0.95" fill="#006bb8"/>
</svg>
<!-- tooltip -->
<div class="abs" style="left:415px;top:389px;width:163px;height:45px;background:#404040;border-radius:4px;box-shadow:0 1px 5px rgba(0,0,0,0.1),0 3.6px 13px rgba(0,0,0,0.07),0 8.4px 23px rgba(0,0,0,0.06)"></div>
<svg class="abs" style="left:489px;top:433px" width="16" height="9"><path d="M0.7 0.7 L15 0.7 L7.8 7.7 Z" fill="#404040"/></svg>
<div class="abs" style="left:428px;top:402px;font-size:14px;letter-spacing:0.33px;color:#ffffff;-webkit-text-stroke:0.2px #ffffff;white-space:nowrap;line-height:18px">Click to send request</div>
<!-- red arrow -->
<svg class="abs" style="left:0;top:0" width="1261" height="860"><path d="M264.95 472.38 L632.35 358.43 L633.08 360.77 L640.70 354.30 L630.76 353.32 L631.49 355.66 L264.65 471.42 Z" fill="#e8141e"/></svg>
</body></html>
